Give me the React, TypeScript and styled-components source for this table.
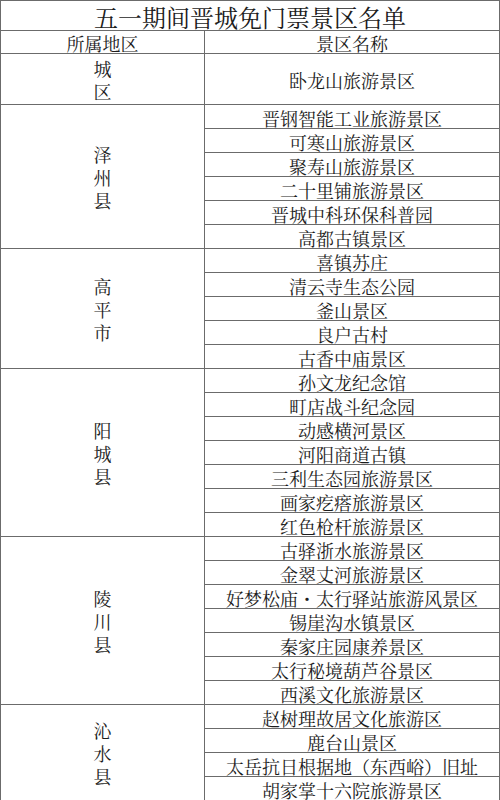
import React from "react";
import styled, { createGlobalStyle } from "styled-components";

const Global = createGlobalStyle`
  html, body { margin: 0; padding: 0; background: #ffffff; }
  * { box-sizing: border-box; }
`;

const LINE = "#6b6b6b";

const Sheet = styled.div`
  width: 500px;
  border-top: 1px solid ${LINE};
  border-left: 1px solid ${LINE};
  border-right: 1px solid ${LINE};
  font-family: "Noto Serif CJK SC", "Noto Sans CJK SC", "Liberation Serif", serif;
  color: #1c1c1c;
  background: #fff;
`;

const Title = styled.div`
  height: 30px;
  border-bottom: 1px solid ${LINE};
  display: flex;
  align-items: center;
  justify-content: center;
  font-size: 24px;
  line-height: 24px;
  padding-top: 2px;
`;

const Row = styled.div`
  display: grid;
  grid-template-columns: 204px 1fr;
  border-bottom: 1px solid ${LINE};
`;

const HeadCell = styled.div<{ $divider?: boolean }>`
  height: 22px;
  display: flex;
  align-items: center;
  justify-content: center;
  font-size: 18px;
  line-height: 18px;
  padding-top: 2px;
  border-right: ${(p) => (p.$divider ? `1px solid ${LINE}` : "none")};
`;

const Region = styled.div`
  border-right: 1px solid ${LINE};
  display: flex;
  flex-direction: column;
  align-items: center;
  justify-content: center;
  font-size: 18px;
  line-height: 23px;
  padding-top: 1px;
`;

const Items = styled.div`
  display: flex;
  flex-direction: column;
`;

const Item = styled.div<{ $tall?: boolean; $last?: boolean }>`
  height: ${(p) => (p.$tall ? 50 : p.$last ? 23 : 24)}px;
  border-bottom: ${(p) => (p.$last ? "none" : `1px solid ${LINE}`)};
  display: flex;
  align-items: center;
  justify-content: center;
  font-size: 18px;
  line-height: 18px;
  padding-top: 2px;
  white-space: nowrap;
`;

type Group = { name: string; items: string[]; tall?: boolean };

const groups: Group[] = [
  { name: "城区", items: ["卧龙山旅游景区"], tall: true },
  {
    name: "泽州县",
    items: [
      "晋钢智能工业旅游景区",
      "可寒山旅游景区",
      "聚寿山旅游景区",
      "二十里铺旅游景区",
      "晋城中科环保科普园",
      "高都古镇景区",
    ],
  },
  {
    name: "高平市",
    items: ["喜镇苏庄", "清云寺生态公园", "釜山景区", "良户古村", "古香中庙景区"],
  },
  {
    name: "阳城县",
    items: [
      "孙文龙纪念馆",
      "町店战斗纪念园",
      "动感横河景区",
      "河阳商道古镇",
      "三利生态园旅游景区",
      "画家疙瘩旅游景区",
      "红色枪杆旅游景区",
    ],
  },
  {
    name: "陵川县",
    items: [
      "古驿浙水旅游景区",
      "金翠丈河旅游景区",
      "好梦松庙・太行驿站旅游风景区",
      "锡崖沟水镇景区",
      "秦家庄园康养景区",
      "太行秘境葫芦谷景区",
      "西溪文化旅游景区",
    ],
  },
  {
    name: "沁水县",
    items: [
      "赵树理故居文化旅游区",
      "鹿台山景区",
      "太岳抗日根据地（东西峪）旧址",
      "胡家掌十六院旅游景区",
    ],
  },
];

export default function App() {
  return (
    <>
      <Global />
      <Sheet>
        <Title>五一期间晋城免门票景区名单</Title>
        <Row>
          <HeadCell $divider>所属地区</HeadCell>
          <HeadCell>景区名称</HeadCell>
        </Row>
        {groups.map((g) => (
          <Row key={g.name}>
            <Region>
              {g.name.split("").map((c, i) => (
                <span key={i}>{c}</span>
              ))}
            </Region>
            <Items>
              {g.items.map((it, i) => (
                <Item key={it} $tall={g.tall} $last={i === g.items.length - 1}>
                  {it}
                </Item>
              ))}
            </Items>
          </Row>
        ))}
      </Sheet>
    </>
  );
}
